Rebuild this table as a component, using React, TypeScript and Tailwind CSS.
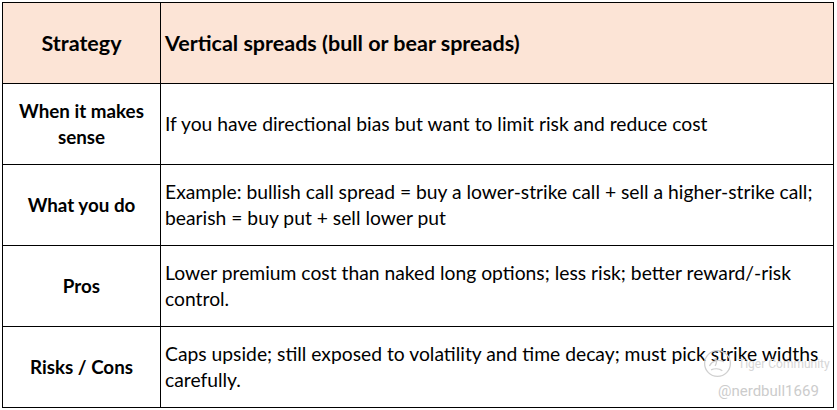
import React from "react";

const rows = [
  {
    label: ["When it makes", "sense"],
    text: ["If you have directional bias but want to limit risk and reduce cost"],
  },
  {
    label: ["What you do"],
    text: [
      "Example: bullish call spread = buy a lower-strike call + sell a higher-strike call;",
      "bearish = buy put + sell lower put",
    ],
  },
  {
    label: ["Pros"],
    text: ["Lower premium cost than naked long options; less risk; better reward/-risk", "control."],
  },
  {
    label: ["Risks / Cons"],
    text: [
      "Caps upside; still exposed to volatility and time decay; must pick strike widths",
      "carefully.",
    ],
  },
];

// ── tiger community watermark ──
function Watermark() {
  return (
    <div className="absolute left-[703px] top-[349px] text-[#cccccc] pointer-events-none font-['Roboto',sans-serif]">
      <div className="flex items-center gap-[6px]">
        <svg width="29" height="29" viewBox="0 0 36 36" fill="none" stroke="#d0d0d0" strokeWidth="1.6">
          <circle cx="18" cy="18" r="16" />
          <path d="M8 21c3-6 11-9 18-5" />
          <path d="M10 26c4-2 10-2 14 1" />
          <path d="M15 11c2 3 2 7 0 10" />
        </svg>
        <span className="text-[12px] leading-none text-[#d6d6d6]">Tiger Community</span>
      </div>
      <div className="mt-[6px] ml-[15px] text-[15px] leading-none">@nerdbull1669</div>
    </div>
  );
}

export default function App() {
  return (
    <div className="relative w-[837px] h-[410px] bg-white font-['Lato',sans-serif] text-black">
      <div className="absolute left-[2px] top-[2px] w-[832px] border border-black">
        {/* header */}
        <div className="grid grid-cols-[158px_1fr] h-[81px] border-b border-black bg-[#fce4d6]">
          <div className="flex items-center justify-center border-r border-black text-[21.5px] font-bold">
            Strategy
          </div>
          <div className="flex items-center pl-[4px] text-[21.5px] font-bold">
            Vertical spreads (bull or bear spreads)
          </div>
        </div>

        {rows.map((row, i) => (
          <div
            key={i}
            className={`grid grid-cols-[158px_1fr] ${i === rows.length - 1 ? "h-[80px]" : "h-[81px] border-b border-black"}`}
          >
            <div className="flex flex-col items-center justify-center border-r border-black text-[18.8px] font-bold leading-[26px] text-center">
              {row.label.map((l) => (
                <span key={l}>{l}</span>
              ))}
            </div>
            <div className="flex flex-col justify-center pl-[4px] text-[19.3px] leading-[26px]">
              {row.text.map((t) => (
                <span key={t} className="whitespace-nowrap">{t}</span>
              ))}
            </div>
          </div>
        ))}
      </div>
      <Watermark />
    </div>
  );
}
